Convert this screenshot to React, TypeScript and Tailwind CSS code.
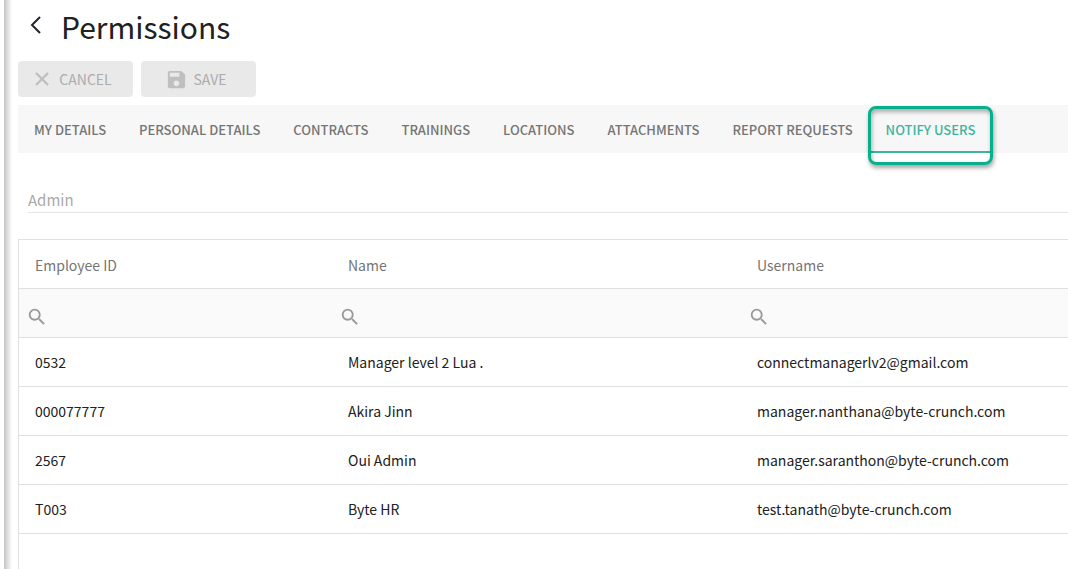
import { useState } from 'react'
import { MdSave, MdSearch } from 'react-icons/md'

const tabs = [
  'My Details', 'Personal Details', 'Contracts', 'Trainings',
  'Locations', 'Attachments', 'Report Requests', 'Notify Users',
]

const columns = [
  { key: 'id', label: 'Employee ID', width: 'w-[313px]' },
  { key: 'name', label: 'Name', width: 'w-[409px]' },
  { key: 'username', label: 'Username', width: '' },
] as const

const users = [
  { id: '0532', name: 'Manager level 2 Lua .', username: 'connectmanagerlv2@gmail.com' },
  { id: '000077777', name: 'Akira Jinn', username: 'manager.nanthana@byte-crunch.com' },
  { id: '2567', name: 'Oui Admin', username: 'manager.saranthon@byte-crunch.com' },
  { id: 'T003', name: 'Byte HR', username: 'test.tanath@byte-crunch.com' },
]

const UsersTable = () => {
  const [filters, setFilters] = useState({ id: '', name: '', username: '' })
  const rows = users.filter(u =>
    columns.every(c => u[c.key].toLowerCase().includes(filters[c.key].toLowerCase()))
  )

  return (
    <div className="flex-1 border-t border-l border-[#e0e0e0]">
      <table className="w-full table-fixed border-collapse text-left">
        <thead>
          <tr className="h-12 border-b border-[#e0e0e0]">
            {columns.map(c => (
              <th key={c.key} scope="col" className={`${c.width} px-4 pt-0.5 font-normal text-[#757575]`}>{c.label}</th>
            ))}
          </tr>
          <tr className="h-[49px] border-b border-[#e0e0e0] bg-[#fafafa]">
            {columns.map(c => (
              <td key={c.key} className="px-[7px] pt-2">
                <label className="flex items-center gap-1">
                  <MdSearch size={22} className="shrink-0 text-[#999]" />
                  <input
                    aria-label={`Filter ${c.label}`}
                    value={filters[c.key]}
                    onChange={e => setFilters({ ...filters, [c.key]: e.target.value })}
                    className="min-w-0 flex-1 bg-transparent outline-none"
                  />
                </label>
              </td>
            ))}
          </tr>
        </thead>
        <tbody>
          {rows.map(u => (
            <tr key={u.id} className="h-[49px] border-b border-[#e0e0e0]">
              {columns.map(c => <td key={c.key} className="px-4">{u[c.key]}</td>)}
            </tr>
          ))}
        </tbody>
      </table>
    </div>
  )
}

const App = () => {
  const [active, setActive] = useState('Notify Users')

  return (
    <div className="flex min-h-screen overflow-hidden bg-white pl-1 font-['Noto_Sans_CJK_JP','Noto_Sans',sans-serif] text-sm text-[#212121]">
      <div className="w-2 shrink-0 bg-linear-to-r from-[#c4c4c4] to-white" />
      <main className="flex min-w-0 flex-1 flex-col pl-1.5">
        {/* Header */}
        <header className="flex h-[61px] items-start pl-3">
          <button aria-label="Back" className="pt-4">
            <svg width="11" height="18" viewBox="0 0 11 18" fill="none" stroke="#212529" strokeWidth="2">
              <path d="M10 1 2 9l8 8" />
            </svg>
          </button>
          <h1 className="pt-1.5 pl-5 text-[30px] leading-10">Permissions</h1>
        </header>

        {/* Actions */}
        <div className="flex gap-2 text-[#acacac]">
          <button disabled className="flex h-9 w-[115px] items-center justify-center gap-2.5 rounded bg-[#e9e9e9] pr-1">
            <svg width="14" height="14" viewBox="0 0 14 14" fill="none" stroke="#bfbfbf" strokeWidth="2.4">
              <path d="m1 1 12 12M13 1 1 13" />
            </svg>
            CANCEL
          </button>
          <button disabled className="flex h-9 w-[115px] items-center justify-center gap-1.5 rounded bg-[#e9e9e9] pr-1.5">
            <MdSave size={23} className="text-[#bfbfbf]" /> SAVE
          </button>
        </div>

        {/* Tabs */}
        <nav role="tablist" className="mt-2 flex h-12 gap-px bg-[#f7f7f7] text-[13px] font-medium">
          {tabs.map(tab => (
            <button
              key={tab}
              role="tab"
              aria-selected={tab === active}
              onClick={() => setActive(tab)}
              className={`relative shrink-0 border-b-2 px-4 pt-1 whitespace-nowrap uppercase ${tab === active ? 'border-[#3cb5a0] text-[#3cb5a0]' : 'border-transparent text-[#757575]'}`}
            >
              {tab}
              {tab === 'Notify Users' && (
                <span className="absolute -inset-x-0.5 top-px -bottom-3.5 rounded-lg border-3 border-[#06b08d] shadow-[1px_3px_4px_rgba(0,0,0,0.35),inset_1px_3px_4px_rgba(0,0,0,0.3)]" />
              )}
            </button>
          ))}
        </nav>

        <input
          aria-label="Role"
          placeholder="Admin"
          className="mt-9 mb-[26px] ml-2.5 h-6 border-b border-[#e4e6ea] pb-0.5 text-[15px] outline-none placeholder:text-[#a9a9a9]"
        />

        <UsersTable />
      </main>
    </div>
  )
}
export default App
